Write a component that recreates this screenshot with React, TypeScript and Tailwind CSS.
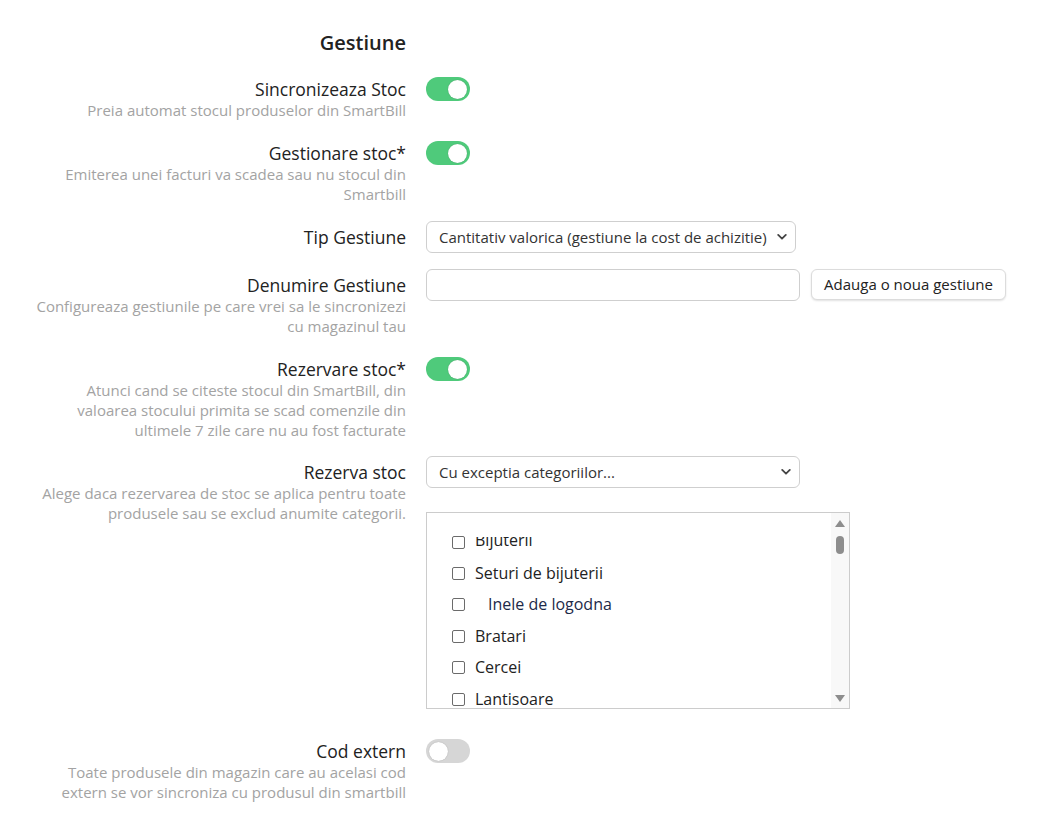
import { useState } from "react"

// -----------------------------
// Small building blocks
// -----------------------------
function Toggle({ on }: { on: boolean }) {
  return (
    <button
      type="button"
      className={
        on
          ? "flex h-[24px] w-[44px] items-center justify-end rounded-full bg-[#4fca7b] px-[3px]"
          : "flex h-[24px] w-[44px] items-center justify-start rounded-full bg-[#d6d6d6] px-[3px]"
      }
    >
      <span className="block h-[19px] w-[19px] rounded-full bg-white shadow-[0_0_1px_rgba(0,0,0,0.3)]" />
    </button>
  )
}

function Chevron() {
  return (
    <svg width="10" height="7" viewBox="0 0 10 7" className="pointer-events-none absolute right-[9px] top-1/2 -translate-y-1/2">
      <path d="M1.2 1.4 5 5.2 8.8 1.4" fill="none" stroke="#444" strokeWidth="1.8" strokeLinecap="round" strokeLinejoin="round" />
    </svg>
  )
}

function Select({ value, width }: { value: string; width: string }) {
  return (
    <div className={`relative ${width}`}>
      <div className="flex h-[32px] items-center rounded-[6px] border border-[#cfcfcf] bg-white pl-[12px] text-[15px] text-[#333]">
        {value}
      </div>
      <Chevron />
    </div>
  )
}

function Row({
  label,
  desc,
  pad,
  className,
  children,
}: {
  label: string
  desc?: string
  pad: string
  className: string
  children: React.ReactNode
}) {
  return (
    <div className={`flex ${className}`}>
      <div className={`ml-[31px] w-[375px] shrink-0 text-right ${pad}`}>
        <div className="text-[17.5px] leading-[22px] text-[#222]">{label}</div>
        {desc && <div className="text-[15px] leading-[20px] text-[#a3a3a3]">{desc}</div>}
      </div>
      <div className="ml-[20px]">{children}</div>
    </div>
  )
}

const categories = [
  { name: "Seturi de bijuterii", sub: false },
  { name: "Inele de logodna", sub: true },
  { name: "Bratari", sub: false },
  { name: "Cercei", sub: false },
  { name: "Lantisoare", sub: false },
]

function Box() {
  return <span className="block h-[13px] w-[13px] shrink-0 rounded-[2px] border border-[#6b6b6b] bg-white" />
}

// -----------------------------
// Category list (scrolled slightly)
// -----------------------------
function CategoryList() {
  const [checked] = useState<string[]>([])
  return (
    <div className="mt-[24px] flex h-[197px] w-[424px] overflow-hidden border border-[#cccccc] bg-white">
      <div className="flex-1 pl-[25px] pt-[20px] text-[16px] text-[#222]">
        <div className="flex h-[17px] items-center gap-[10px]">
          <span className="mt-[2px]">
            <Box />
          </span>
          <span className="flex h-[17px] items-end">
            <span className="flex h-[13px] items-end overflow-hidden">
              <span className="leading-[20px]">Bijuterii</span>
            </span>
          </span>
        </div>
        {categories.map(c => (
          <div key={c.name} className="mt-[14.6px] flex h-[17px] items-center gap-[10px]">
            <Box />
            <span className={c.sub ? "pl-[13px] leading-[17px] text-[#1d2a48]" : "leading-[17px]"}>
              {checked.includes(c.name) ? c.name : c.name}
            </span>
          </div>
        ))}
      </div>
      <div className="flex w-[18px] flex-col items-center justify-between bg-[#f8f8f8] pb-[5px] pt-[6px]">
        <div className="flex flex-col items-center">
          <svg width="12" height="9" viewBox="0 0 12 9">
            <path d="M6 1 11 8H1Z" fill="#8d8d8d" />
          </svg>
          <span className="mt-[8px] block h-[18px] w-[8px] rounded-full bg-[#8d8d8d]" />
        </div>
        <svg width="12" height="9" viewBox="0 0 12 9">
          <path d="M1 1h10L6 8Z" fill="#8d8d8d" />
        </svg>
      </div>
    </div>
  )
}

// -----------------------------
// Page
// -----------------------------
export default function App() {
  return (
    <div className="min-h-[831px] bg-white pb-[20px] pt-[30px] font-['Open_Sans',sans-serif]">
      <div className="ml-[31px] w-[375px] text-right text-[20px] font-semibold leading-[26px] text-[#222]">Gestiune</div>

      <Row label="Sincronizeaza Stoc" desc="Preia automat stocul produselor din SmartBill" pad="pt-[1px]" className="mt-[21px]">
        <Toggle on />
      </Row>

      <Row
        label="Gestionare stoc*"
        desc="Emiterea unei facturi va scadea sau nu stocul din Smartbill"
        pad="pt-[1px]"
        className="mt-[21px]"
      >
        <Toggle on />
      </Row>

      <Row label="Tip Gestiune" pad="pt-[5px]" className="mt-[17px]">
        <Select value="Cantitativ valorica (gestiune la cost de achizitie)" width="w-[370px]" />
      </Row>

      <Row
        label="Denumire Gestiune"
        desc="Configureaza gestiunile pe care vrei sa le sincronizezi cu magazinul tau"
        pad="pt-[5px]"
        className="mt-[16px]"
      >
        <div className="flex items-start gap-[11px]">
          <input className="h-[32px] w-[374px] rounded-[6px] border border-[#cfcfcf] bg-white px-[12px] outline-none" />
          <button
            type="button"
            className="h-[31px] w-[195px] rounded-[6px] border border-[#dcdcdc] bg-white text-[15px] text-[#222] shadow-[0_1px_2px_rgba(0,0,0,0.12)]"
          >
            Adauga o noua gestiune
          </button>
        </div>
      </Row>

      <Row
        label="Rezervare stoc*"
        desc="Atunci cand se citeste stocul din SmartBill, din valoarea stocului primita se scad comenzile din ultimele 7 zile care nu au fost facturate"
        pad="pt-[1px]"
        className="mt-[21px]"
      >
        <Toggle on />
      </Row>

      <Row
        label="Rezerva stoc"
        desc="Alege daca rezervarea de stoc se aplica pentru toate produsele sau se exclud anumite categorii."
        pad="pt-[5px]"
        className="mt-[16px]"
      >
        <Select value="Cu exceptia categoriilor..." width="w-[374px]" />
        <CategoryList />
      </Row>

      <Row
        label="Cod extern"
        desc="Toate produsele din magazin care au acelasi cod extern se vor sincroniza cu produsul din smartbill"
        pad="pt-[1px]"
        className="mt-[30px]"
      >
        <Toggle on={false} />
      </Row>
    </div>
  )
}
